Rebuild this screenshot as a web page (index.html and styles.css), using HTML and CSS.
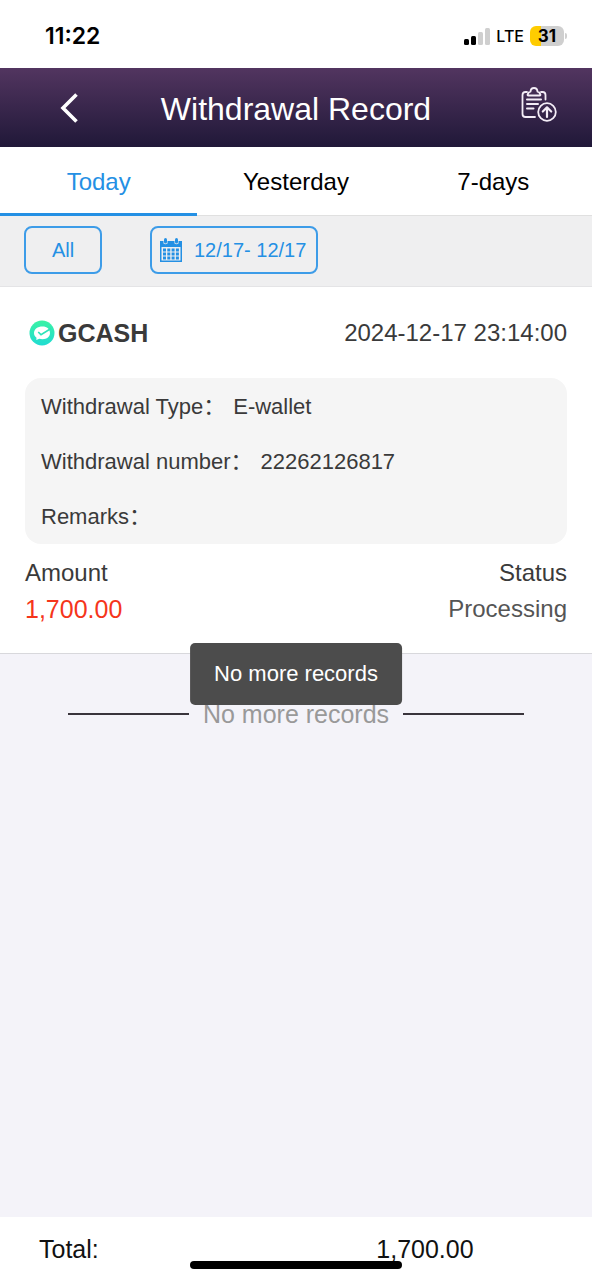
FILE: index.html
```html
<!DOCTYPE html>
<html lang="en">
<head>
<meta charset="utf-8">
<meta name="viewport" content="width=device-width, initial-scale=1">
<title>Withdrawal Record</title>
<link rel="stylesheet" href="styles.css">
</head>
<body>
<div class="screen">
  <div class="status-bar">
    <span class="clock">11:22</span>
    <div class="status-icons">
      <svg class="signal" width="27" height="17" viewBox="0 0 27 17" aria-hidden="true">
        <rect x="0" y="11" width="5" height="6" rx="1.5" fill="#000"/>
        <rect x="7" y="8" width="5" height="9" rx="1.5" fill="#000"/>
        <rect x="14" y="4" width="5" height="13" rx="1.5" fill="#cfcfcf"/>
        <rect x="21" y="0" width="5" height="17" rx="1.5" fill="#cfcfcf"/>
      </svg>
      <span class="network">LTE</span>
      <span class="battery">31</span>
      <span class="battery-cap"></span>
    </div>
  </div>

  <header class="header">
    <button class="icon-button" type="button" aria-label="Back">
      <svg width="20" height="32" viewBox="0 0 20 32" fill="none" stroke="#fff" stroke-width="3.6"><path d="M17.500 2.500L4 16l13.500 13.500"/></svg>
    </button>
    <h1 class="title">Withdrawal Record</h1>
    <button class="icon-button" type="button" aria-label="Submit record">
      <svg class="record-icon" width="36" height="36" viewBox="0 0 36 36" fill="none" stroke="#f4edf7" stroke-width="1.8" stroke-linecap="round" stroke-linejoin="round">
        <path d="M6 5H4.500Q1.500 5 1.500 8V27Q1.500 30 4.500 30H14"/>
        <path d="M20 5H21.500Q24.500 5 24.500 8V12.500"/>
        <path d="M7.500 8.500C6.500 8.500 6.300 7.800 6.800 7C7.500 5.500 8 4.800 9.500 4.600C9.700 2.300 11 1 13 1S16.300 2.300 16.500 4.600C18 4.800 18.500 5.500 19.200 7C19.700 7.800 19.500 8.500 18.500 8.500Z"/>
        <path d="M6 12.500H20M6 17H17M6 21.500H12.500" stroke-width="2"/>
        <circle cx="26" cy="25" r="8.800"/>
        <path d="M26 30V20.500M21.800 24.500L26 20.300L30.200 24.500" stroke-width="2.200"/>
      </svg>
    </button>
  </header>

  <nav class="tabs">
    <button class="tab tab-active" type="button">Today</button>
    <button class="tab" type="button">Yesterday</button>
    <button class="tab" type="button">7-days</button>
  </nav>

  <div class="filters">
    <button class="filter filter-all" type="button">All</button>
    <button class="filter filter-date" type="button">
      <svg width="22" height="24" viewBox="0 0 22 24" aria-hidden="true">
        <path d="M0 3H22V24H0Z" fill="#2490e4"/>
        <path d="M1.500 9H20.500V22.500H1.500Z" fill="#efeff0"/>
        <path d="M3.500 3H7.500V5.500Q5.500 7 3.500 5.500ZM14.500 3H18.500V5.500Q16.500 7 14.500 5.500Z" fill="#efeff0"/>
        <rect x="4" y="0" width="3" height="5.500" rx="1.500" fill="#2490e4"/>
        <rect x="15" y="0" width="3" height="5.500" rx="1.500" fill="#2490e4"/>
        <path d="M3 10.500h3v3h-3zM7.300 10.500h3v3h-3zM11.600 10.500h3v3h-3zM15.900 10.500h3v3h-3zM3 14.500h3v3h-3zM7.300 14.500h3v3h-3zM11.600 14.500h3v3h-3zM15.900 14.500h3v3h-3zM3 18.500h3v3h-3zM7.300 18.500h3v3h-3zM11.600 18.500h3v3h-3zM15.900 18.500h3v3h-3z" fill="#2490e4"/>
      </svg>
      <span>12/17- 12/17</span>
    </button>
  </div>

  <main class="records">
    <article class="record">
      <div class="record-head">
        <h2 class="wallet">
          <svg width="26" height="26" viewBox="0 0 26 26" aria-hidden="true">
            <defs><linearGradient id="mint" x1="0" y1="0" x2="0" y2="1"><stop offset="0" stop-color="#3af2a4"/><stop offset="1" stop-color="#20dcd2"/></linearGradient></defs>
            <circle cx="13" cy="13" r="12.500" fill="url(#mint)"/>
            <path d="M13.500 6.500C8.500 6.500 5 9.200 5 13c0 2 1 3.700 2.500 4.700L7.300 20l3-1.200c1 .3 2 .4 3.200.4 4.500 0 7.500-2.700 7.500-6.200 0-3.800-3-6.500-7.500-6.500Z" fill="#fff"/>
            <path d="M9.200 12L12 14.700L22 8.500" fill="none" stroke="#2ee3b8" stroke-width="1.600"/>
          </svg>
          <span>GCASH</span>
        </h2>
        <time class="date" datetime="2024-12-17T23:14:00">2024-12-17 23:14:00</time>
      </div>
      <dl class="details">
        <div class="detail"><dt>Withdrawal Type：</dt><dd>E-wallet</dd></div>
        <div class="detail"><dt>Withdrawal number：</dt><dd>22262126817</dd></div>
        <div class="detail"><dt>Remarks：</dt><dd></dd></div>
      </dl>
      <div class="summary">
        <div class="summary-item">
          <span>Amount</span>
          <span class="amount">1,700.00</span>
        </div>
        <div class="summary-item summary-right">
          <span>Status</span>
          <span class="state">Processing</span>
        </div>
      </div>
    </article>
    <div class="list-end"><span>No more records</span></div>
    <div class="toast" role="status">No more records</div>
  </main>

  <footer class="total">
    <span>Total:</span>
    <span>1,700.00</span>
    <div class="home-indicator"></div>
  </footer>
</div>
</body>
</html>
```

FILE: styles.css
```css
* {
  box-sizing: border-box;
}

body {
  margin: 0;
  background: #f4f3f9;
  color: #3a3a3a;
  font-family: "Liberation Sans", "Noto Sans CJK SC", sans-serif;
  font-size: 24px;
  line-height: 32px;
}

button {
  margin: 0;
  padding: 0;
  border: 0;
  background: none;
  color: inherit;
  font: inherit;
}

h1,
h2,
dl,
dd {
  margin: 0;
}

svg {
  display: block;
  flex: none;
}

.screen {
  display: flex;
  flex-direction: column;
  min-height: 100vh;
}

.status-bar {
  display: flex;
  align-items: center;
  justify-content: space-between;
  padding: 20px 25px 16px 45px;
  background: #fff;
  color: #000;
  font-family: Inter, sans-serif;
}

.clock {
  font-size: 23px;
  font-weight: 600;
}

.status-icons {
  display: flex;
  align-items: center;
}

.network {
  margin: 0 6px 0 5px;
  font-size: 16px;
  font-weight: 500;
}

.battery {
  width: 34px;
  border-radius: 6px;
  background: linear-gradient(90deg, #fc0 0 31%, #cfcfcf 31%);
  font-size: 17px;
  font-weight: 700;
  line-height: 20px;
  text-align: center;
}

.battery-cap {
  width: 2px;
  height: 6px;
  margin-left: 1px;
  border-radius: 0 2px 2px 0;
  background: #cfcfcf;
}

.header {
  display: grid;
  grid-template-columns: 1fr auto 1fr;
  align-items: center;
  height: 79px;
  padding: 0 32px;
  background: linear-gradient(#523560, #201838);
  color: #fff;
}

.icon-button {
  display: flex;
  align-items: center;
  justify-content: center;
  width: 42px;
  height: 48px;
}

.icon-button:first-child {
  margin-left: 16px;
}

.icon-button:last-child {
  justify-self: end;
}

.record-icon {
  margin-bottom: 6px;
}

.title {
  padding-top: 2px;
  font-size: 32px;
  font-weight: 400;
}

.tabs {
  display: grid;
  grid-template-columns: repeat(3, 1fr);
  border-bottom: 1px solid #e0e0e0;
  background: #fff;
  color: #000;
}

.tab {
  height: 69px;
  margin-bottom: -1px;
  padding-top: 3px;
  border-bottom: 3px solid transparent;
}

.tab-active {
  border-color: #2490e4;
  color: #2490e4;
}

.filters {
  display: flex;
  gap: 48px;
  padding: 10px 24px 12px;
  border-bottom: 1px solid #e4e4e6;
  background: #efeff0;
}

.filter {
  display: flex;
  align-items: center;
  justify-content: center;
  height: 48px;
  border: 2px solid #3d9ce8;
  border-radius: 8px;
  color: #2490e4;
  font-size: 20px;
}

.filter-all {
  width: 78px;
}

.filter-date {
  gap: 12px;
  padding: 0 10px 0 8px;
}

.records {
  position: relative;
  flex: 1;
}

.record {
  padding: 24px 25px 28px;
  border-bottom: 1px solid #d8d8dc;
  background: #fff;
}

.record-head {
  display: flex;
  align-items: center;
  justify-content: space-between;
  padding-top: 6px;
}

.wallet {
  display: flex;
  align-items: center;
  gap: 3px;
  padding-left: 4px;
  font-size: 25px;
}

.details {
  display: flex;
  flex-direction: column;
  gap: 23px;
  margin: 29px 0 13px;
  padding: 13px 16px 11px;
  border-radius: 16px;
  background: #f5f5f5;
  font-size: 22px;
}

.detail {
  display: flex;
  gap: 8px;
}

.summary {
  display: flex;
  justify-content: space-between;
}

.summary-item {
  display: flex;
  flex-direction: column;
  gap: 4px;
}

.summary-right {
  align-items: flex-end;
}

.amount {
  color: #f5351b;
  font-size: 25px;
}

.state {
  color: #555;
}

.list-end {
  display: flex;
  align-items: center;
  gap: 14px;
  padding: 44px 68px 0;
  color: #999;
  font-size: 25px;
}

.list-end::before,
.list-end::after {
  flex: 1;
  height: 2px;
  background: #39343c;
  content: "";
}

.toast {
  position: absolute;
  top: 356px;
  left: 50%;
  padding: 15px 24px;
  border-radius: 5px;
  background: #4c4c4c;
  color: #fff;
  font-size: 22px;
  white-space: nowrap;
  transform: translateX(-50%);
}

.total {
  position: relative;
  display: flex;
  justify-content: space-between;
  padding: 16px 20% 15px 39px;
  background: #fff;
  color: #111;
  font-size: 25px;
}

.home-indicator {
  position: absolute;
  bottom: 11px;
  left: 50%;
  width: 212px;
  height: 8px;
  border-radius: 4px;
  background: #000;
  transform: translateX(-50%);
}
```
